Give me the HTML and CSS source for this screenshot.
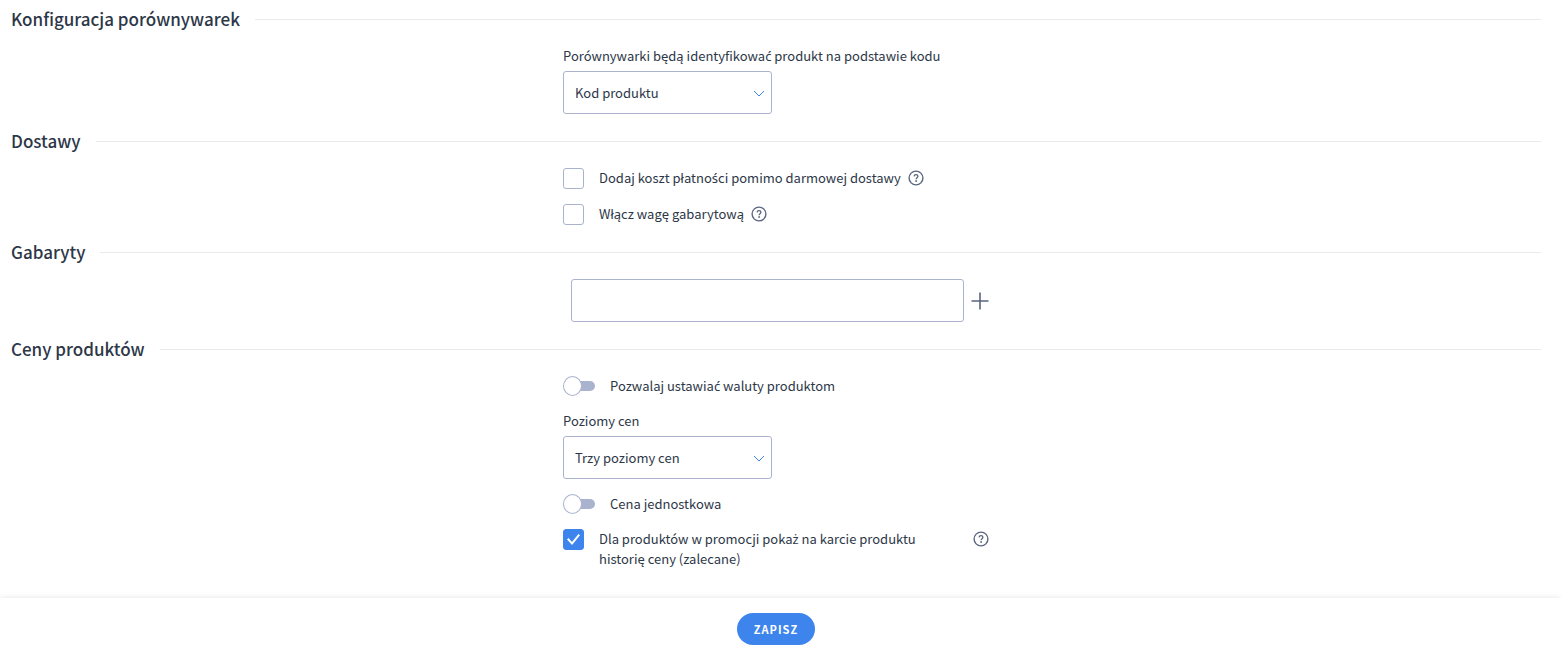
FILE: index.html
```html
<!DOCTYPE html>
<html lang="pl">
<head>
  <meta charset="UTF-8">
  <meta name="viewport" content="width=device-width, initial-scale=1.0">
  <title>Konfiguracja</title>
  <link rel="stylesheet" href="styles.css">
</head>
<body>
  <svg class="sprite" aria-hidden="true">
    <symbol id="icon-help" viewBox="0 0 16 16">
      <circle cx="8" cy="8" r="6.9" fill="none" stroke="currentColor" stroke-width="1.4"/>
      <path d="M6.1 6.4C6.2 5.3 7 4.7 8 4.7s1.9.6 1.9 1.6c0 1.3-1.8 1.4-1.8 2.9" fill="none" stroke="currentColor" stroke-width="1.3"/>
      <circle cx="8.1" cy="11" r=".9" fill="currentColor"/>
    </symbol>
  </svg>

  <form class="page">
    <main class="content">
      <section class="section">
        <h2 class="section-title">Konfiguracja porównywarek</h2>
        <div class="fields">
          <div class="field">
            <label class="field-label" for="product-code">Porównywarki będą identyfikowa<span class="accent">ć</span> produkt na podstawie kodu</label>
            <div class="select">
              <select id="product-code">
                <option>Kod produktu</option>
              </select>
              <svg class="select-arrow" viewBox="0 0 12 7"><path d="M1 1l5 5 5-5"/></svg>
            </div>
          </div>
        </div>
      </section>

      <section class="section">
        <h2 class="section-title">Dostawy</h2>
        <div class="fields">
          <div class="check-row">
            <input class="checkbox" type="checkbox" id="payment-cost">
            <label for="payment-cost">Dodaj koszt płatno<span class="accent">ś</span>ci pomimo darmowej dostawy</label>
            <button class="help" type="button" aria-label="Pomoc"><svg><use href="#icon-help"/></svg></button>
          </div>
          <div class="check-row">
            <input class="checkbox" type="checkbox" id="dimensional-weight">
            <label for="dimensional-weight">Włącz wagę gabarytową</label>
            <button class="help" type="button" aria-label="Pomoc"><svg><use href="#icon-help"/></svg></button>
          </div>
        </div>
      </section>

      <section class="section">
        <h2 class="section-title" id="dimensions-title">Gabaryty</h2>
        <div class="fields">
          <div class="add-row">
            <input class="text-input" type="text" aria-labelledby="dimensions-title">
            <button class="add" type="button" aria-label="Dodaj">
              <svg viewBox="0 0 18 18"><path d="M9 .5v17M.5 9h17"/></svg>
            </button>
          </div>
        </div>
      </section>

      <section class="section">
        <h2 class="section-title">Ceny produktów</h2>
        <div class="fields">
          <div class="toggle-row">
            <input class="toggle" type="checkbox" role="switch" id="product-currency">
            <label for="product-currency">Pozwalaj ustawia<span class="accent">ć</span> waluty produktom</label>
          </div>
          <div class="field">
            <label class="field-label" for="price-levels">Poziomy cen</label>
            <div class="select">
              <select id="price-levels">
                <option>Trzy poziomy cen</option>
              </select>
              <svg class="select-arrow" viewBox="0 0 12 7"><path d="M1 1l5 5 5-5"/></svg>
            </div>
          </div>
          <div class="toggle-row">
            <input class="toggle" type="checkbox" role="switch" id="unit-price">
            <label for="unit-price">Cena jednostkowa</label>
          </div>
          <div class="check-row">
            <input class="checkbox" type="checkbox" id="price-history" checked>
            <label class="label-wide" for="price-history">Dla produktów w promocji poka<span class="accent">ż</span> na karcie produktu <span>historię ceny (zalecane)</span></label>
            <button class="help" type="button" aria-label="Pomoc"><svg><use href="#icon-help"/></svg></button>
          </div>
        </div>
      </section>
    </main>

    <footer class="footer">
      <button class="save" type="submit">ZAPISZ</button>
    </footer>
  </form>
</body>
</html>
```
FILE: styles.css
```css
* {
  margin: 0;
  padding: 0;
  box-sizing: border-box;
}

body {
  font-family: "Source Sans Pro", "Noto Sans CJK SC", "Noto Sans", sans-serif;
  font-size: 13px;
  line-height: 20px;
  color: #2d3748;
  background: #fff;
}

button,
input,
select {
  font: inherit;
  color: inherit;
}

button {
  border: none;
  background: none;
  cursor: pointer;
}

.sprite {
  display: none;
}

/* letters the CJK family has no composed glyph for */
.accent {
  font-family: "Noto Sans", sans-serif;
  line-height: 1;
}

.page {
  display: flex;
  flex-direction: column;
  min-height: 100vh;
}

.content {
  flex: 1;
  padding: 5px 20px 15px 11px;
}

.section {
  margin-bottom: 13px;
}

.section-title {
  display: flex;
  align-items: center;
  gap: 15px;
  margin-bottom: 13px;
  font-size: 17px;
  font-weight: 500;
  line-height: 28px;
}

.section-title::after {
  content: "";
  flex: 1;
  height: 1px;
  background: #e8eaec;
}

.fields {
  display: flex;
  flex-direction: column;
  gap: 15px;
  max-width: 426px;
  margin: 0 auto;
}

.field {
  display: flex;
  flex-direction: column;
  gap: 5px;
}

.select {
  position: relative;
  width: 209px;
}

.select select {
  display: block;
  width: 100%;
  height: 43px;
  padding: 0 11px;
  border: 1px solid #a9b3cd;
  border-radius: 3px;
  background: #fff;
  appearance: none;
}

.select-arrow {
  position: absolute;
  top: 19px;
  right: 7px;
  width: 12px;
  height: 7px;
  fill: none;
  stroke: #3d84ec;
  pointer-events: none;
}

.check-row {
  display: flex;
  align-items: flex-start;
}

.checkbox {
  flex: none;
  width: 21px;
  height: 21px;
  margin-right: 15px;
  border: 1px solid #a9b3cd;
  border-radius: 3px;
  background: #fff;
  appearance: none;
}

.checkbox:checked {
  display: grid;
  place-items: center;
  border-color: #3d84ec;
  background: #3d84ec;
}

.checkbox:checked::before {
  content: "";
  width: 13px;
  height: 11px;
  background: #fff;
  clip-path: polygon(0 50%, 12% 37%, 38% 72%, 88% 0, 100% 12%, 39% 100%);
}

.label-wide {
  flex: 1;
  padding-right: 32px;
}

.help {
  display: flex;
  flex: none;
  width: 16px;
  height: 16px;
  margin: 2px 0 0 7px;
  color: #5a6480;
}

.help svg {
  width: 16px;
  height: 16px;
}

.add-row {
  display: flex;
  align-items: center;
  gap: 7px;
  padding-left: 8px;
}

.text-input {
  flex: 1;
  min-width: 0;
  height: 43px;
  padding: 0 11px;
  border: 1px solid #a9b3cd;
  border-radius: 3px;
}

.add {
  display: flex;
  width: 18px;
  height: 18px;
}

.add svg {
  width: 18px;
  height: 18px;
  stroke: #5a6480;
  stroke-width: 1.6;
}

.toggle-row {
  display: flex;
  align-items: center;
  gap: 15px;
}

.toggle {
  display: flex;
  align-items: center;
  width: 32px;
  height: 18px;
  appearance: none;
}

.toggle::before {
  content: "";
  z-index: 1;
  width: 18px;
  height: 18px;
  border: 1px solid #a9b3cd;
  border-radius: 50%;
  background: #fff;
}

.toggle::after {
  content: "";
  width: 18px;
  height: 10px;
  margin-left: -4px;
  border-radius: 0 5px 5px 0;
  background: #a9b3cd;
}

.footer {
  display: flex;
  justify-content: center;
  padding: 15px 9px 15px 0;
  background: #fff;
  box-shadow: 0 0 6px rgba(0, 0, 0, 0.1);
}

.save {
  height: 32px;
  padding: 0 17px;
  border-radius: 16px;
  font-size: 11px;
  font-weight: 700;
  letter-spacing: 1px;
  color: #fff;
  background: #3d84ec;
}
```
